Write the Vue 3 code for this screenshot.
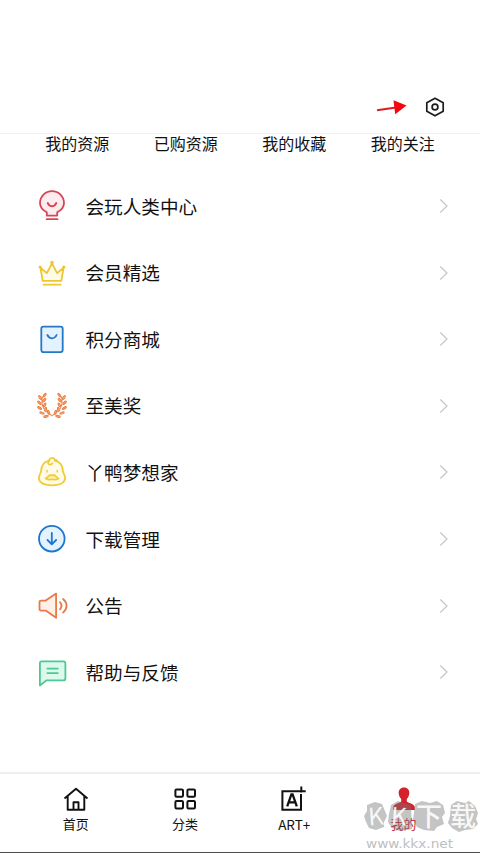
<script setup>
const tabs = ['我的资源', '已购资源', '我的收藏', '我的关注']
const items = [
  { icon: 'bulb', label: '会玩人类中心' },
  { icon: 'crown', label: '会员精选' },
  { icon: 'bag', label: '积分商城' },
  { icon: 'laurel', label: '至美奖' },
  { icon: 'duck', label: '丫鸭梦想家' },
  { icon: 'download', label: '下载管理' },
  { icon: 'speaker', label: '公告' },
  { icon: 'chat', label: '帮助与反馈' },
]
// Leaves of one laurel branch: centre x, centre y, rotation
const leaves = [
  [10.6, 7.2, 40], [6.2, 9.6, -35], [10.2, 12.2, 42], [5.4, 14.8, -48],
  [10.6, 17, 32], [5.6, 20, -58], [11.6, 21.4, 8], [8, 25, -72], [14.6, 24.4, -22], [12, 28.4, 78],
]
</script>

<template>
  <div class="screen">
    <header class="top">
      <svg class="arrow" width="32" height="18" viewBox="0 0 32 18">
        <path d="M1 12.3 20 9.4" stroke="#dc1c24" stroke-width="2" />
        <path d="M17.5 2.3 30.5 7.5 19.2 16.3Z" fill="#f5050d" />
      </svg>
      <svg class="gear" width="22" height="22" viewBox="0 0 22 22" fill="none" stroke="#1c1c1c" stroke-width="1.7" stroke-linejoin="round">
        <path d="M11 2.3 19.2 6.7v8.6L11 19.8 2.8 15.3V6.7Z" />
        <circle cx="11" cy="11" r="2.9" />
      </svg>
    </header>

    <nav class="tabs">
      <span v-for="tab in tabs" :key="tab">{{ tab }}</span>
    </nav>

    <main class="list">
      <div v-for="item in items" :key="item.icon" class="row">
        <svg class="icon" :class="item.icon" width="36" height="36" viewBox="0 0 36 36" fill="none" stroke="currentColor" stroke-width="1.8" stroke-linecap="round" stroke-linejoin="round">
          <template v-if="item.icon === 'bulb'">
            <path d="M12.8 27.6v-3.4C8.4 22 6 18.8 6 15a12 11.8 0 0 1 24 0c0 3.8-2.4 7-6.8 9.2v3.4Z" fill="#fdecef" />
            <path d="M13.7 15c2 4.3 6.6 4.3 8.6 0M12.7 31.2h10.8" />
          </template>
          <template v-else-if="item.icon === 'crown'">
            <path d="M8.7 25.8 6.4 12.7l6.4 5.4L18 8.3l5.1 9.8 6.5-5.4-2.3 13.1Z" fill="#fffbe8" />
            <circle cx="18" cy="7.6" r=".9" /><circle cx="6.2" cy="12" r=".7" /><circle cx="29.8" cy="12" r=".7" />
            <path d="M9.6 29.7h17" />
          </template>
          <template v-else-if="item.icon === 'bag'">
            <rect x="7.3" y="5.6" width="21.4" height="25.5" rx="2" fill="#e3f2ff" />
            <path d="M13.4 14c2.1 4.4 7.2 4.4 9.2 0" />
          </template>
          <template v-else-if="item.icon === 'laurel'">
            <g v-for="side in [1, -1]" :key="side" :transform="side === 1 ? undefined : 'translate(36 0) scale(-1 1)'">
              <path d="M8.4 9C7 16 8.2 23 18 27.6" stroke-width="1" />
              <ellipse v-for="(leaf, i) in leaves" :key="i" rx=".9" ry="2.3" :transform="`translate(${leaf[0]} ${leaf[1]}) rotate(${leaf[2]})`" fill="#f6a878" stroke-width="1" />
            </g>
          </template>
          <template v-else-if="item.icon === 'duck'">
            <path d="M15.4 6.6C10.2 7.4 7.4 11.6 7.1 17.1c-.1 2-2.4 4-2.2 7.2.4 5 6 7 13.1 7s12.7-2 13.1-7c.2-3.2-2.1-5.2-2.2-7.2-.3-5.7-3.3-9.8-8.3-10.5" fill="#fffbe8" />
            <path d="M15.1 7.2c-.4-3 4.6-4.6 5.2-1.8 2 .1 2.8.9 3.5 2.2M15.1 7c-1.8 1.2-1.2 3.4.7 3.6 1.2.1 1.8-.6 2.6-1.2" />
            <path d="M13.1 16.6v1.4M23.3 16.6v1.4" stroke-width="1.5" />
            <path d="M11.6 24.5c2.1-.7 3.2-3.5 5-3.5.8 0 1 .5 1.5.5s.8-.5 1.6-.5c1.8 0 2.8 2.8 5 3.5-1.6 1.9-3.7.9-6.6.9s-4.9 1-6.5-.9Z" fill="#fff0ac" />
          </template>
          <template v-else-if="item.icon === 'download'">
            <circle cx="17.8" cy="17.7" r="12.8" fill="#e3f2ff" />
            <path d="M17.8 12v11.2M13.5 19l4.3 4.3 4.3-4.3" />
          </template>
          <template v-else-if="item.icon === 'speaker'">
            <path d="M7 12.6h4.7L22.1 5.6v24.2L11.7 22.6H7a1.5 1.5 0 0 1-1.5-1.5v-7A1.5 1.5 0 0 1 7 12.6Z" fill="#fff0e7" />
            <path d="M26 14.1c1.9 2.3 1.9 5 0 7.3M29.1 11c4.6 4 4.6 9.6 0 13.6" />
          </template>
          <template v-else>
            <path d="M7.6 7.4h21.8c1.2 0 2 .8 2 2v15c0 1.2-.8 2-2 2H12.4L5.9 31.5V9c0-1 .7-1.6 1.7-1.6Z" fill="#dcf9eb" />
            <path d="M13.4 14.6h10.4M13.4 19.2h10.4" />
          </template>
        </svg>
        <span class="label">{{ item.label }}</span>
        <svg class="chevron" width="10" height="16" viewBox="0 0 10 16" fill="none" stroke="#c6c6c6" stroke-width="1.2">
          <path d="M1.3 1.5 8 8l-6.7 6.5" />
        </svg>
      </div>
    </main>

    <footer class="bottom">
      <div class="entry">
        <svg width="28" height="28" viewBox="0 0 28 28" fill="none" stroke="#111" stroke-width="1.9" stroke-linejoin="round">
          <path d="M2.5 13.4 14 3.8l11.5 9.6M5.7 11v13.8h16.6V11M11.5 24.8v-7.5h5v7.5" />
        </svg>
        <span>首页</span>
      </div>
      <div class="entry">
        <svg width="28" height="28" viewBox="0 0 28 28" fill="none" stroke="#111" stroke-width="2">
          <rect x="4.4" y="4.4" width="7.6" height="7.4" rx="1.2" /><rect x="16.4" y="4.4" width="7.6" height="7.4" rx="1.2" />
          <rect x="4.4" y="16" width="7.6" height="7.4" rx="1.2" /><rect x="16.4" y="16" width="7.6" height="7.4" rx="1.2" />
        </svg>
        <span>分类</span>
      </div>
      <div class="entry">
        <svg width="28" height="28" viewBox="0 0 28 28" fill="none" stroke="#111" stroke-width="2">
          <path d="M19.8 6.2H2.4v18.5H21V9M21.3 1.5v6M17.5 6.2h8.2" />
          <path d="m7.2 21.4 4.2-12h1.2l4.2 12M8.8 17.4h6.4" stroke-width="2.3" />
        </svg>
        <span class="latin">ART+</span>
      </div>
      <div class="entry active">
        <svg width="28" height="28" viewBox="0 0 28 28" fill="#d3222c">
          <path d="M14 2.5c3.5 0 5.6 2.4 5.3 6-.2 2.7-1.4 4.2-2.5 5.5v2.5c1 1.8 7.6 1.8 8 5.8V25H3.2v-2.7c.4-4 7-4 8-5.8V14c-1.1-1.3-2.3-2.8-2.5-5.5-.3-3.6 1.8-6 5.3-6Z" />
        </svg>
        <span>我的</span>
      </div>
    </footer>

    <svg class="watermark" width="117" height="65" viewBox="0 -10 117 65">
      <g class="blobs">
        <path d="m4 7 8-3 7 2 3 7 2 5-3 6v5l-8 3-7-2-3-6-2-6 3-5Z" />
        <path d="m28 7 7-4 9 3 4 1 1 24-5 1-7 1-8-3-4-6 1-8Z" />
        <path d="m52 6 7-3 8 2 7-2 6 4 2 8-3 4 2 7-7 3-3 4-10-1-7-3-4-7 1-8Z" />
        <path d="m88 7 6-4 8 2 4-2 6 5 3 7-2 6 2 5-5 5-8 1-6 2-7-4-4-5 2-7Z" />
      </g>
      <g class="brand">
        <text x="5" y="27" transform="rotate(-4 12 18)">K</text>
        <text x="28" y="27" transform="rotate(4 34 18)">K</text>
        <text class="hanzi" x="53" y="28">下</text>
        <text class="hanzi" x="87" y="28">载</text>
      </g>
      <text class="url" x="3" y="50" textLength="87" lengthAdjust="spacingAndGlyphs">www.kkx.net</text>
    </svg>
  </div>
</template>

<style>
body { margin: 0; background: #fff; }
</style>

<style scoped>
.screen {
  position: relative;
  display: flex;
  flex-direction: column;
  box-sizing: border-box;
  width: 480px;
  height: 853px;
  overflow: hidden;
  border-bottom: 1px solid #4a4a4a;
  background: #fff;
  color: #111;
  font-family: "Noto Sans CJK SC", sans-serif;
}
.top {
  display: flex;
  align-items: flex-end;
  justify-content: flex-end;
  gap: 16px;
  box-sizing: border-box;
  height: 134px;
  padding: 0 34px 15px 0;
  border-bottom: 1px solid #f2f2f2;
}
.arrow { margin-bottom: 2px; }
.tabs {
  display: grid;
  grid-template-columns: repeat(4, 108.5px);
  height: 39px;
  padding-left: 23px;
  font-size: 16px;
  line-height: 18px;
  text-align: center;
}
.list { flex: 1; }
.row {
  display: flex;
  align-items: center;
  height: 66.55px;
  padding: 0 31px 0 34px;
}
.label {
  flex: 1;
  margin-left: 15.5px;
  padding-bottom: 1px;
  font-size: 18.6px;
  line-height: 28px;
}
.bulb { color: #d74555; }
.crown { color: #eec62f; }
.bag { color: #2479c7; }
.laurel { color: #ed7d40; }
.duck { color: #efcd36; }
.download { color: #1d75d0; }
.speaker { color: #e87949; }
.chat { color: #4dc993; }
.bottom {
  display: grid;
  grid-template-columns: repeat(4, 109.3px);
  box-sizing: border-box;
  height: 80px;
  padding: 11px 0 0 21px;
  border-top: 2px solid #efefef;
}
.entry {
  display: flex;
  flex-direction: column;
  align-items: center;
  font-size: 13px;
  line-height: 20px;
}
.entry span { margin-top: 1px; }
.latin { font-size: 13.5px; }
.active { color: #c92c3c; }
.watermark {
  position: absolute;
  left: 363px;
  top: 788px;
}
.blobs { fill: #777; fill-opacity: .43; }
.brand { fill: #fff; fill-opacity: .9; font-size: 24px; }
.hanzi { font-size: 26px; font-weight: 500; }
.url { fill: #c0c0c0; font-family: "DejaVu Sans", sans-serif; font-size: 12px; }
</style>
